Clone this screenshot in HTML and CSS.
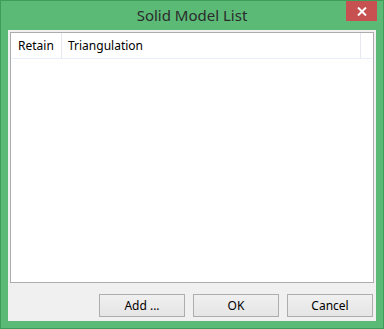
FILE: index.html
```html
<!DOCTYPE html>
<html lang="en">
  <head>
    <meta charset="UTF-8" />
    <meta name="viewport" content="width=device-width, initial-scale=1.0" />
    <title>Solid Model List</title>
    <link rel="stylesheet" href="styles.css">
  </head>
  <body>
    <div class="window">
      <div class="titlebar">
        <span class="title">Solid Model List</span>
        <div class="close-button">
          <svg width="10" height="9" viewBox="0 0 10 9">
            <path d="M1 0.5 L9 8.5 M9 0.5 L1 8.5" stroke="#fff" stroke-width="2" />
          </svg>
        </div>
      </div>

      <div class="client">
        <!-- list view -->
        <div class="list">
          <div class="list-header">
            <div class="col col-retain">Retain</div>
            <div class="col col-tri">Triangulation</div>
            <div class="col col-fill"></div>
          </div>
        </div>

        <div class="button-row">
          <button class="button">Add ...</button>
          <button class="button">OK</button>
          <button class="button">Cancel</button>
        </div>
      </div>
    </div>
  </body>
</html>
```
FILE: styles.css
```css
body {
  margin: 0;
  padding: 0;
  font-family: "Noto Sans", "Open Sans", sans-serif;
  font-size: 12px;
}

.window {
  width: 384px;
  height: 329px;
  box-sizing: border-box;
  border: 1px solid #3f9d59;
  background-color: #5bba76;
  display: flex;
  flex-direction: column;
}

.titlebar {
  height: 29px;
  display: flex;
  justify-content: center;
  position: relative;
}
.title {
  font-size: 15px;
  color: #2b2b2b;
  line-height: 29px;
}
.close-button {
  position: absolute;
  top: 0;
  right: 6px;
  width: 31px;
  height: 20px;
  background-color: #c75050;
  display: flex;
  align-items: center;
  justify-content: center;
}

.client {
  flex: 1;
  margin: 0 7px 7px 7px;
  background-color: #f0f0f0;
  padding: 2px 2px 4px 2px;
  display: flex;
  flex-direction: column;
}

.list {
  flex: 1;
  background-color: #fff;
  border: 1px solid #acacac;
  padding: 0 0 0 1px;
}
.list-header {
  display: flex;
  height: 25px;
  border-bottom: 1px solid #e6eef7;
  margin-right: 1px;
  color: #000;
}
.col {
  display: flex;
  align-items: center;
  padding-left: 6px;
  border-right: 1px solid #e5e9ef;
}
.col-retain {
  width: 43px;
}
.col-tri {
  width: 292px;
}
.col-fill {
  flex: 1;
  border-right: none;
}

.button-row {
  display: flex;
  justify-content: flex-end;
  gap: 8px;
  margin-top: 11px;
  padding-right: 1px;
}
.button {
  width: 86px;
  height: 23px;
  border: 1px solid #adadad;
  background: linear-gradient(#f0f0f0, #e5e5e5);
  font-family: "Noto Sans", "Open Sans", sans-serif;
  font-size: 12px;
  color: #000;
  padding: 0;
}
```
